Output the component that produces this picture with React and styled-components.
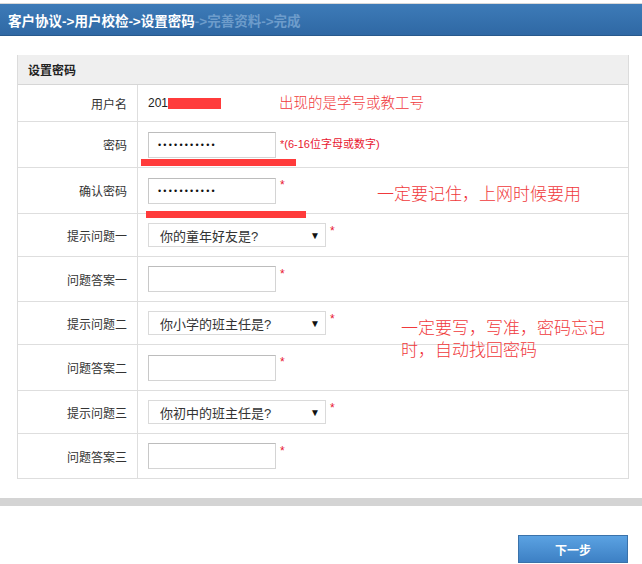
import React from "react";
import styled, { createGlobalStyle } from "styled-components";

const Global = createGlobalStyle`
  html, body { margin: 0; padding: 0; background: #fff; }
  body { font-family: "Liberation Sans", "Noto Sans CJK SC", sans-serif; font-size: 12px; color: #333; }
`;

const Page = styled.div`
  position: relative;
  width: 642px;
  height: 564px;
  overflow: hidden;
  display: flex;
  flex-direction: column;
`;

const TopBar = styled.div`
  margin-top: 3px;
  border-top: 1px solid #d8d8d8;
  height: 31px;
  background: linear-gradient(#3d7bb8, #2f68a4);
  border-bottom: 1px solid #28598c;
  display: flex;
  align-items: center;
  padding-left: 8px;
  font-size: 13.5px;
  font-weight: bold;
`;

const Step = styled.span`
  color: ${(p) => (p.$done ? "#ffffff" : "#6d9ccb")};
  white-space: pre;
`;

const Panel = styled.div`
  margin: 19px 0 0 17px;
  width: 610px;
  border-left: 1px solid #dcdcdc;
  border-right: 1px solid #dcdcdc;
`;

const PanelHeader = styled.div`
  height: 29px;
  background: #efefef;
  border-bottom: 1px solid #d6d6d6;
  display: flex;
  align-items: center;
  padding-left: 10px;
  font-weight: bold;
  font-size: 12px;
  color: #222;
`;

const Row = styled.div`
  display: grid;
  grid-template-columns: 120px 1fr;
  height: ${(p) => p.$h}px;
  border-bottom: 1px solid #dedede;
  box-sizing: border-box;
`;

const Label = styled.div`
  border-right: 1px solid #dedede;
  display: flex;
  align-items: center;
  justify-content: flex-end;
  padding-right: 10px;
  font-size: 12px;
  color: #333;
`;

const Cell = styled.div`
  display: flex;
  align-items: center;
  padding-left: 10px;
  gap: 4px;
`;

const Value = styled.span`
  font-size: 12px;
  color: #222;
  display: flex;
  align-items: center;
`;

const Redact = styled.span`
  display: inline-block;
  width: 53px;
  height: 11px;
  background: #ff3b3b;
`;

const InputBox = styled.div`
  width: 128px;
  height: 26px;
  box-sizing: border-box;
  border: 1px solid #d4d4d4;
  border-top-color: #bcbcbc;
  border-left-color: #c8c8c8;
  background: #fff;
  display: flex;
  align-items: center;
  padding-left: 9px;
`;

const Dots = styled.span`
  font-size: 9px;
  letter-spacing: 2.2px;
  color: #111;
`;

const SelectBox = styled.div`
  width: 178px;
  height: 24px;
  box-sizing: border-box;
  border: 1px solid #dadada;
  background: #fff;
  display: flex;
  align-items: center;
  justify-content: space-between;
  padding: 0 5px 0 11px;
  font-size: 13px;
  color: #333;
`;

const Arrow = styled.span`
  font-size: 10px;
  color: #111;
`;

const Star = styled.span`
  color: #e8162f;
  font-size: ${(p) => (p.$hint ? "11px" : "12px")};
  align-self: flex-start;
  margin-top: ${(p) => (p.$hint ? "13px" : "10px")};
`;

const BottomBar = styled.div`
  margin-top: 19px;
  height: 8px;
  background: #d4d4d4;
`;

const Footer = styled.div`
  display: flex;
  justify-content: flex-end;
  padding: 29px 14px 0 0;
`;

const NextButton = styled.button`
  width: 110px;
  height: 28px;
  border: 1px solid #3a72aa;
  background: linear-gradient(#5ba2e2, #3d80c4);
  color: #fff;
  font-family: "Liberation Sans", "Noto Sans CJK SC", sans-serif;
  font-size: 12px;
  font-weight: bold;
  cursor: pointer;
  padding: 0;
`;

const Note = styled.div`
  position: absolute;
  left: ${(p) => p.$x}px;
  top: ${(p) => p.$y}px;
  color: #f0393c;
  font-size: ${(p) => p.$size}px;
  line-height: 22px;
  white-space: pre;
  font-family: "Noto Sans CJK SC", sans-serif;
  font-weight: 300;
`;

const Underline = styled.div`
  position: absolute;
  left: ${(p) => p.$x}px;
  top: ${(p) => p.$y}px;
  width: ${(p) => p.$w}px;
  height: 7px;
  background: #ff3b3b;
`;

const rows = [
  { label: "用户名", h: 37, kind: "value" },
  { label: "密码", h: 46, kind: "pwd", hint: "*(6-16位字母或数字)" },
  { label: "确认密码", h: 46, kind: "pwd" },
  { label: "提示问题一", h: 43, kind: "select", text: "你的童年好友是?" },
  { label: "问题答案一", h: 45, kind: "input" },
  { label: "提示问题二", h: 43, kind: "select", text: "你小学的班主任是?" },
  { label: "问题答案二", h: 46, kind: "input" },
  { label: "提示问题三", h: 43, kind: "select", text: "你初中的班主任是?" },
  { label: "问题答案三", h: 45, kind: "input" },
];

function Field({ row }) {
  if (row.kind === "value") {
    return (
      <Value>
        201
        <Redact />
      </Value>
    );
  }
  if (row.kind === "pwd") {
    return (
      <>
        <InputBox>
          <Dots>•••••••••••</Dots>
        </InputBox>
        <Star $hint={!!row.hint}>{row.hint || "*"}</Star>
      </>
    );
  }
  if (row.kind === "select") {
    return (
      <>
        <SelectBox>
          <span>{row.text}</span>
          <Arrow>▼</Arrow>
        </SelectBox>
        <Star>*</Star>
      </>
    );
  }
  return (
    <>
      <InputBox />
      <Star>*</Star>
    </>
  );
}

export default function App() {
  return (
    <Page>
      <Global />
      <TopBar>
        <Step $done>客户协议-&gt;用户校检-&gt;设置密码</Step>
        <Step>-&gt;完善资料-&gt;完成</Step>
      </TopBar>
      <Panel>
        <PanelHeader>设置密码</PanelHeader>
        {rows.map((r) => (
          <Row key={r.label} $h={r.h}>
            <Label>{r.label}</Label>
            <Cell>
              <Field row={r} />
            </Cell>
          </Row>
        ))}
      </Panel>
      <BottomBar />
      <Footer>
        <NextButton>下一步</NextButton>
      </Footer>

      <Underline $x={141} $y={159} $w={155} />
      <Underline $x={146} $y={211} $w={160} />
      <Note $x={279} $y={91} $size={14.5}>出现的是学号或教工号</Note>
      <Note $x={377} $y={182} $size={17}>一定要记住，上网时候要用</Note>
      <Note $x={401} $y={316} $size={17}>{"一定要写，写准，密码忘记\n时，自动找回密码"}</Note>
    </Page>
  );
}
